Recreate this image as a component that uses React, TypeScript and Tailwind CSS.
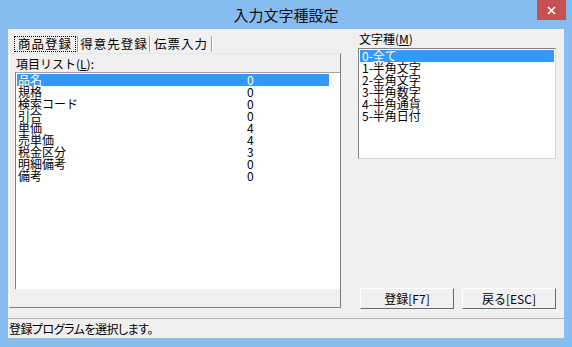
import React from "react";

const font = { fontFamily: '"Noto Sans CJK JP", "Noto Sans", sans-serif' };

const items: [string, string][] = [
  ["品名", "0"],
  ["規格", "0"],
  ["検索コード", "0"],
  ["引合", "0"],
  ["単価", "4"],
  ["売単価", "4"],
  ["税金区分", "3"],
  ["明細備考", "0"],
  ["備考", "0"],
];

const kinds = ["0-全て", "1-半角文字", "2-全角文字", "3-半角数字", "4-半角通貨", "5-半角日付"];

function Sep() {
  return <div className="w-[2px] h-[16px] border-l border-l-[#a0a0a0] border-r border-r-white" />;
}

export default function App() {
  return (
    <div
      className="w-[572px] h-[347px] bg-[#86bcef] flex flex-col text-black text-[12px] leading-[12px]"
      style={font}
    >
      {/* Title bar */}
      <div className="h-[29px] relative flex items-center justify-center">
        <span className="text-[15px] leading-[15px] text-[#111] pb-[1px]">入力文字種設定</span>
        <div className="absolute top-0 right-[6px] w-[29px] h-[20px] bg-[#c75050] flex items-center justify-center">
          <svg width="9" height="9" viewBox="0 0 9 9">
            <path d="M1 1 L8 8 M8 1 L1 8" stroke="#fff" strokeWidth="1.6" />
          </svg>
        </div>
      </div>

      {/* Client area */}
      <div className="flex-1 mx-[8px] mb-[9px] bg-[#f0f0f0] flex flex-col">
        <div className="h-[289px] flex flex-row">
          {/* Left: tab control */}
          <div className="ml-[1px] w-[332px] flex flex-col pt-[5px]">
            <div className="h-[19px] flex flex-row items-start pt-[2px] tracking-[1px] text-[12.5px]">
              <div className="ml-[5px] w-[62px] h-[16px] border border-dotted border-black flex items-center justify-center">
                商品登録
              </div>
              <div className="ml-[1px]">
                <Sep />
              </div>
              <div className="w-[70px] h-[16px] flex items-center justify-center">得意先登録</div>
              <Sep />
              <div className="w-[60px] h-[16px] flex items-center justify-center">伝票入力</div>
              <Sep />
            </div>
            <div className="h-[255px] border-t border-t-[#e6e6e6] border-l border-l-white border-r border-r-[#808080] border-b border-b-[#808080] flex flex-col">
              <div className="pl-[6px] pt-[4px] h-[18px] leading-[12px]">
                項目リスト(<u>L</u>):
              </div>
              <div className="ml-[5px] h-[217px] bg-white border-l border-l-[#828282] border-t border-t-[#a0a0a0] pt-[1px] pl-[1px]">
                {items.map(([name, val], i) => (
                  <div
                    key={name}
                    className={
                      "w-[312px] h-[12px] flex flex-row leading-[12px] " +
                      (i === 0 ? "bg-[#3399ff] text-white" : "")
                    }
                  >
                    <span className="w-[230px] pl-[1px] whitespace-nowrap">{name}</span>
                    <span>{val}</span>
                  </div>
                ))}
              </div>
            </div>
          </div>

          {/* Right column */}
          <div className="ml-[17px] w-[198px] flex flex-col pt-[4px]">
            <div className="h-[12px] leading-[12px] pl-[1px]">
              文字種(<u>M</u>)
            </div>
            <div className="mt-[3px] h-[111px] bg-white border border-t-[#828282] border-l-[#828282] border-r-[#d8d8d8] border-b-[#d8d8d8] pt-[1px] px-[1px]">
              {kinds.map((k, i) => (
                <div
                  key={k}
                  className={
                    "h-[12px] leading-[12px] pl-[2px] whitespace-nowrap " +
                    (i === 0 ? "bg-[#3399ff] text-white" : "")
                  }
                >
                  {k}
                </div>
              ))}
            </div>
            <div className="mt-auto mb-[9px] pl-[2px] flex flex-row gap-[8px]">
              <button className="w-[94px] h-[21px] bg-[#f0f0f0] border border-t-white border-l-white border-r-[#696969] border-b-[#696969] flex items-center justify-center text-[12px]">
                登録[F7]
              </button>
              <button className="w-[94px] h-[21px] bg-[#f0f0f0] border border-t-white border-l-white border-r-[#696969] border-b-[#696969] flex items-center justify-center text-[12px]">
                戻る[ESC]
              </button>
            </div>
          </div>
        </div>

        {/* Status bar */}
        <div
          className="flex-1 border-t border-t-[#b4b4b4] flex items-center pl-[1px] text-[12px] tracking-[-0.5px]"
          style={{ fontFeatureSettings: '"palt"' }}
        >
          登録プログラムを選択します。
        </div>
      </div>
    </div>
  );
}
